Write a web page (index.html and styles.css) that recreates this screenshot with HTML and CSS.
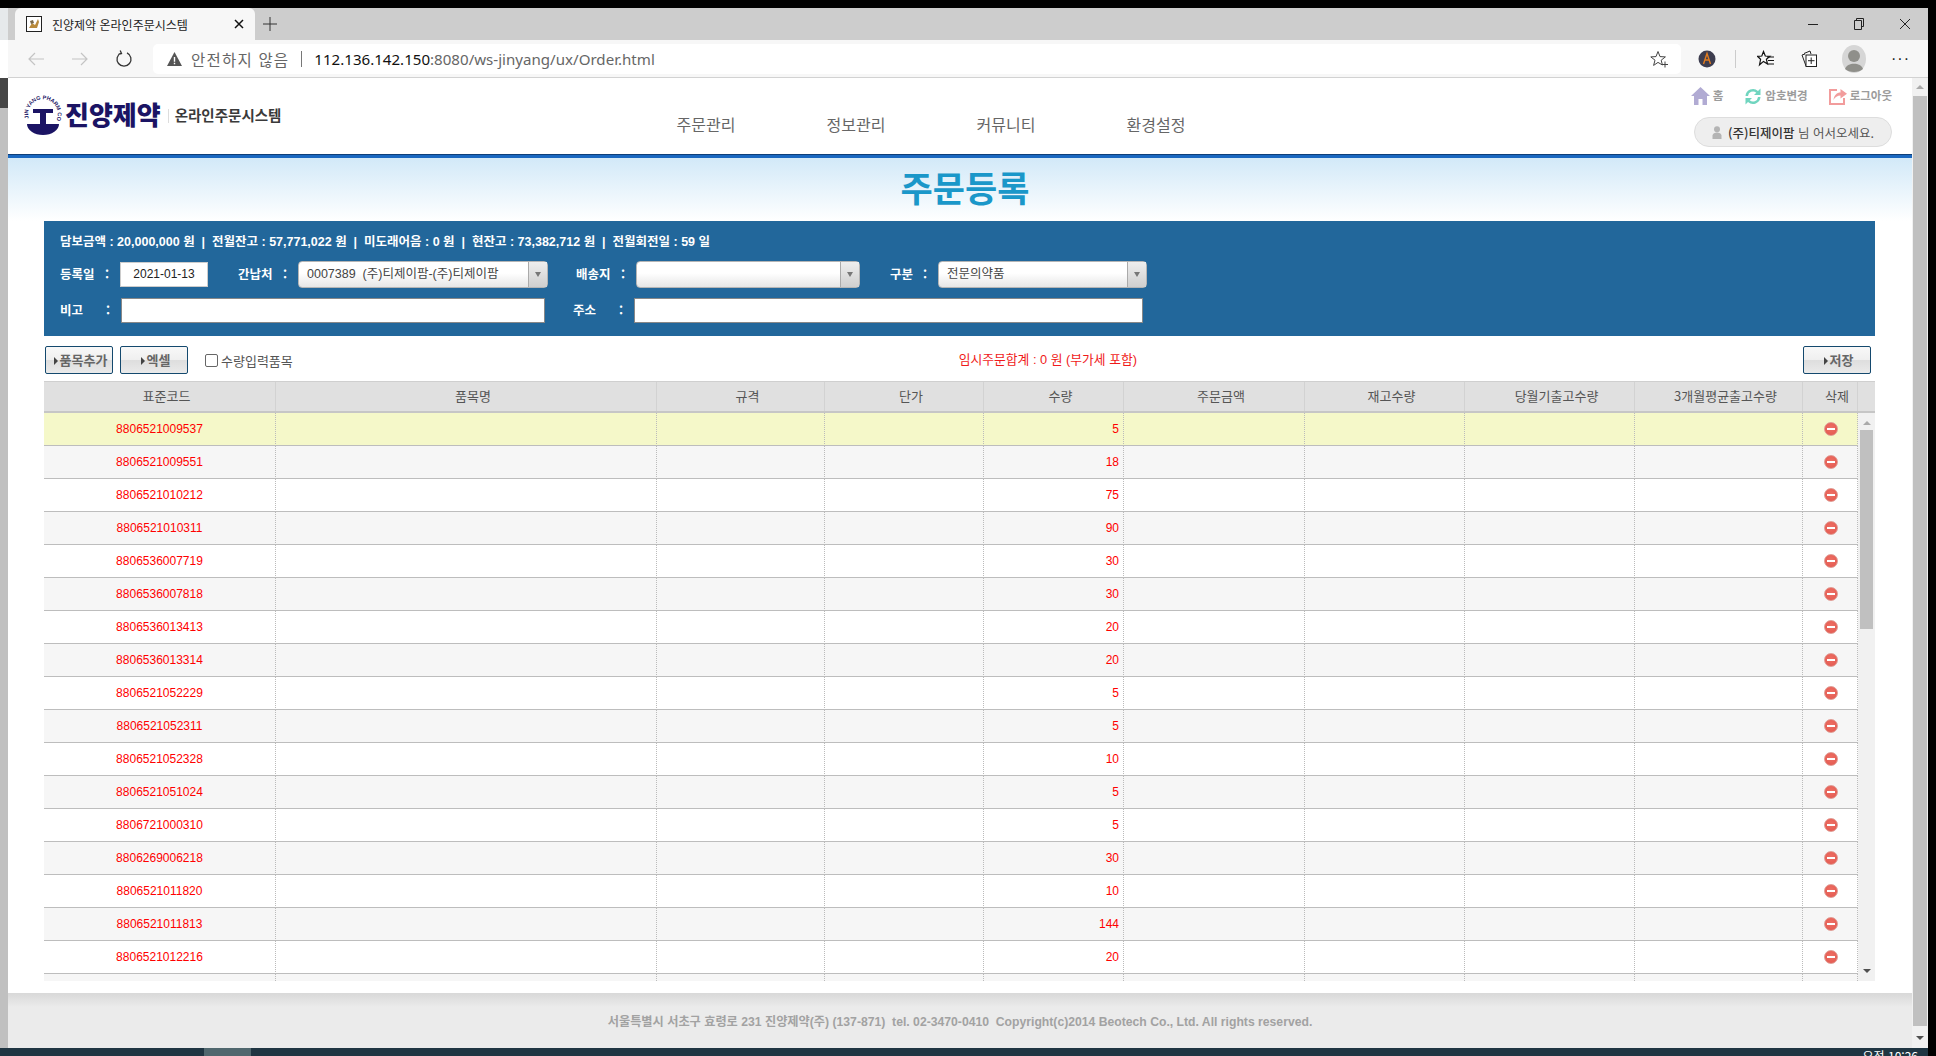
FILE: index.html
```html
<!DOCTYPE html>
<html lang="ko">
<head>
<meta charset="utf-8">
<title>진양제약 온라인주문시스템</title>
<link rel="stylesheet" href="styles.css">
</head>
<body>
<div class="screen-top"></div>
<div class="screen">
  <div class="desk">
    <div class="left-strip">
      <div class="ls-a"></div><div class="ls-b"></div><div class="ls-c"></div><div class="ls-d"></div>
    </div>
    <div class="browser">
      <!-- browser tabs -->
      <div class="tabstrip">
        <div class="tab">
          <svg class="favicon" width="16" height="16" viewBox="0 0 16 16"><rect x="0.5" y="0.5" width="15" height="15" fill="#fff" stroke="#222"/><path d="M3 12 L6 7 L9 9 L12 3 L13 6 L11 12 Z" fill="#b98a3c"/><path d="M4 5 L7 4 L8 7 L5 8 Z" fill="#7a6a4a"/></svg>
          <span class="tab-title">진양제약 온라인주문시스템</span>
          <svg class="tab-x" width="10" height="10" viewBox="0 0 10 10"><path d="M1 1 L9 9 M9 1 L1 9" stroke="#111" stroke-width="1.5"/></svg>
        </div>
        <svg class="tab-plus" width="14" height="14" viewBox="0 0 14 14"><path d="M7 0 V14 M0 7 H14" stroke="#333" stroke-width="1"/></svg>
        <div class="win-btns">
          <svg width="12" height="12" viewBox="0 0 12 12"><path d="M1 6.5 H11" stroke="#222"/></svg>
          <svg width="12" height="12" viewBox="0 0 12 12"><path d="M3.5 2.5 V0.5 H10.5 V8.5 H8.5 M1.5 2.5 H8.5 V11.5 H1.5 Z" fill="none" stroke="#222"/></svg>
          <svg width="12" height="12" viewBox="0 0 12 12"><path d="M1 1 L11 11 M11 1 L1 11" stroke="#222"/></svg>
        </div>
      </div>
      <div class="toolbar">
        <svg class="nav-ico" width="18" height="16" viewBox="0 0 18 16"><path d="M17 8 H2 M8 2 L2 8 L8 14" fill="none" stroke="#c4c4c4" stroke-width="1.2"/></svg>
        <svg class="nav-ico" width="18" height="16" viewBox="0 0 18 16"><path d="M1 8 H16 M10 2 L16 8 L10 14" fill="none" stroke="#c4c4c4" stroke-width="1.2"/></svg>
        <svg class="nav-ico" width="18" height="18" viewBox="0 0 18 18"><path d="M6 2.8 A7 7 0 1 0 12 2.8 M5.2 0.5 L6.5 3.5 L3.4 4.4" fill="none" stroke="#333" stroke-width="1.3"/></svg>
        <div class="addr">
          <svg class="warn" width="15" height="14" viewBox="0 0 15 14"><path d="M7.5 0 L15 14 H0 Z" fill="#555"/><path d="M6.8 5 H8.2 V9.8 H6.8 Z M6.8 10.8 H8.2 V12.2 H6.8 Z" fill="#fff"/></svg>
          <span class="addr-warn">안전하지 않음</span>
          <span class="addr-sep"></span>
          <span class="addr-url"><b>112.136.142.150</b>:8080/ws-jinyang/ux/Order.html</span>
          <svg class="addr-star" width="18" height="18" viewBox="0 0 18 18"><path d="M8 1.5 L10 6.6 L15.4 6.9 L11.2 10.2 L12.4 15 L8 12.4 L3.6 15.4 L5 10.2 L0.8 6.9 L6 6.6 Z" fill="none" stroke="#444"/><path d="M12 14.5 H18 M15 11.5 V17.5" stroke="#444"/></svg>
        </div>
        <div class="tb-right">
          <svg class="ext" width="18" height="18" viewBox="0 0 18 18"><circle cx="9" cy="9" r="8.5" fill="#3d3d4f"/><path d="M5.5 14 L9 3.5 L12.5 14 M6.8 10 H11.2" fill="none" stroke="#e07b1f" stroke-width="1.4"/></svg>
          <span class="tb-sep"></span>
          <svg class="fav" width="18" height="18" viewBox="0 0 18 18"><path d="M6.5 1.5 L8.3 6 L13 6.3 L9.4 9.3 L10.5 14 L6.5 11.4 L2.5 14.8 L3.6 9.3 L0.5 6.3 L4.8 6 Z" fill="none" stroke="#111" stroke-width="1.2"/><path d="M10 7 H17 M11 10.500 H17 M11 14 H17" stroke="#111" stroke-width="1.2"/></svg>
          <svg class="coll" width="18" height="18" viewBox="0 0 18 18"><path d="M4 3.500 L10 1 L11 4 M6 16 L2 5 L5 4" fill="none" stroke="#222"/><rect x="6" y="5" width="10.500" height="11.500" fill="#fff" stroke="#222"/><path d="M11.200 7.500 V14 M8 10.700 H14.500" stroke="#222"/></svg>
          <svg class="avatar" width="24" height="28" viewBox="0 0 24 28"><ellipse cx="12" cy="14" rx="12" ry="14" fill="#d6d6d6"/><circle cx="12" cy="11" r="6" fill="#8f8f8a"/><path d="M3 24 C5 17 19 17 21 24 C17 28 7 28 3 24 Z" fill="#8f8f8a"/></svg>
          <span class="dots">···</span>
        </div>
      </div>

      <!-- page in the browser -->
      <div class="viewport">
        <div class="page">
          <div class="header">
            <div class="logo">
              <svg class="emblem" width="32" height="40" viewBox="0 0 32 40">
                <defs><path id="ring" d="M3.500 27 A14.800 14.800 0 1 1 28.500 27"/></defs>
                <text class="emblem-txt"><textPath href="#ring" startOffset="4">JIN YANG PHARM CO</textPath></text>
                <path d="M6 14 H26 V18 H19 V29 H13 V18 H6 Z" fill="#1b1464"/>
                <path d="M0 29 H32 A16 11 0 0 1 0 29 Z" fill="#1b1464"/>
              </svg>
              <span class="logo-name">진양제약</span>
              <span class="logo-sep"></span>
              <span class="logo-sub">온라인주문시스템</span>
            </div>
            <div class="gnb">
              <a>주문관리</a><a>정보관리</a><a>커뮤니티</a><a>환경설정</a>
            </div>
            <div class="user-area">
              <div class="quick">
                <span class="quick-item">
                  <svg width="19" height="18" viewBox="0 0 19 18"><path d="M9.500 0 L19 9 H16 V18 H11.500 V12 H7.500 V18 H3 V9 H0 Z" fill="#b1abd3"/></svg>
                  <span>홈</span>
                </span>
                <span class="quick-item">
                  <svg width="18" height="19" viewBox="0 0 18 19"><path d="M1.500 9 A7.500 7.500 0 0 1 14 4 L16.500 1.500 V8 H10 L12.300 5.700 A5 5 0 0 0 4 9 Z M16.500 10 A7.500 7.500 0 0 1 4 15 L1.500 17.500 V11 H8 L5.700 13.300 A5 5 0 0 0 14 10 Z" fill="#70d5bf"/></svg>
                  <span>암호변경</span>
                </span>
                <span class="quick-item">
                  <svg width="18" height="18" viewBox="0 0 18 18"><path d="M8 3 H1 V17 H15 V11" fill="none" stroke="#f29c9c" stroke-width="2"/><path d="M4.500 13 C5 8 8 5.500 11.500 5.500 V2 L18 6.800 L11.500 11.500 V8.500 C8.500 8.500 6 10 4.500 13 Z" fill="#f29c9c"/></svg>
                  <span>로그아웃</span>
                </span>
              </div>
              <div class="welcome">
                <svg width="10" height="13" viewBox="0 0 10 13"><circle cx="5" cy="3.200" r="3" fill="#b4b4b4"/><path d="M0.500 13 V9.500 C0.500 7.500 3 6.500 5 6.500 C7 6.500 9.500 7.500 9.500 9.500 V13 Z" fill="#b4b4b4"/></svg>
                <b>(주)티제이팜</b>&nbsp;님 어서오세요.
              </div>
            </div>
          </div>
          <div class="blue-line"></div>

          <div class="title-band"><h1>주문등록</h1></div>

          <div class="search-panel">
            <div class="info-line">담보금액 : 20,000,000 원 &nbsp;|&nbsp; 전월잔고 : 57,771,022 원 &nbsp;|&nbsp; 미도래어음 : 0 원 &nbsp;|&nbsp; 현잔고 : 73,382,712 원 &nbsp;|&nbsp; 전월회전일 : 59 일</div>
            <div class="form-row row-a">
              <label class="lb w60"><span>등록일</span><span>:</span></label>
              <div class="date-box">2021-01-13</div>
              <label class="lb w60 gap30"><span>간납처</span><span>:</span></label>
              <div class="combo w250"><span class="combo-val">0007389 &nbsp;(주)티제이팜-(주)티제이팜</span><span class="combo-btn"></span></div>
              <label class="lb w60 gap28"><span>배송지</span><span>:</span></label>
              <div class="combo w224"><span class="combo-val"></span><span class="combo-btn"></span></div>
              <label class="lb w48 gap30"><span>구분</span><span>:</span></label>
              <div class="combo w209"><span class="combo-val">전문의약품</span><span class="combo-btn"></span></div>
            </div>
            <div class="form-row row-b">
              <label class="lb w61"><span>비고</span><span>:</span></label>
              <div class="text-box w424"></div>
              <label class="lb w61 gap28"><span>주소</span><span>:</span></label>
              <div class="text-box w509"></div>
            </div>
          </div>

          <div class="action-bar">
            <button class="btn">품목추가</button>
            <button class="btn">엑셀</button>
            <label class="chk"><span class="chk-box"></span>수량입력품목</label>
            <div class="total">임시주문합계 : 0 원 (부가세 포함)</div>
            <button class="btn save">저장</button>
          </div>

          <div class="grid">
            <div class="grid-head">
              <div class="th c1">표준코드</div>
              <div class="th c2">품목명</div>
              <div class="th c3">규격</div>
              <div class="th c4">단가</div>
              <div class="th c5">수량</div>
              <div class="th c6">주문금액</div>
              <div class="th c7">재고수량</div>
              <div class="th c8">당월기출고수량</div>
              <div class="th c9">3개월평균출고수량</div>
              <div class="th c10">삭제</div>
              <div class="th c11"></div>
            </div>
            <div class="grid-body">
              <table class="rows">
                <colgroup><col class="c1"><col class="c2"><col class="c3"><col class="c4"><col class="c5"><col class="c6"><col class="c7"><col class="c8"><col class="c9"><col class="c10"></colgroup>
                <tr class="sel"><td class="code">8806521009537</td><td></td><td></td><td></td><td class="qty">5</td><td></td><td></td><td></td><td></td><td class="del"><i></i></td></tr>
                <tr><td class="code">8806521009551</td><td></td><td></td><td></td><td class="qty">18</td><td></td><td></td><td></td><td></td><td class="del"><i></i></td></tr>
                <tr><td class="code">8806521010212</td><td></td><td></td><td></td><td class="qty">75</td><td></td><td></td><td></td><td></td><td class="del"><i></i></td></tr>
                <tr><td class="code">8806521010311</td><td></td><td></td><td></td><td class="qty">90</td><td></td><td></td><td></td><td></td><td class="del"><i></i></td></tr>
                <tr><td class="code">8806536007719</td><td></td><td></td><td></td><td class="qty">30</td><td></td><td></td><td></td><td></td><td class="del"><i></i></td></tr>
                <tr><td class="code">8806536007818</td><td></td><td></td><td></td><td class="qty">30</td><td></td><td></td><td></td><td></td><td class="del"><i></i></td></tr>
                <tr><td class="code">8806536013413</td><td></td><td></td><td></td><td class="qty">20</td><td></td><td></td><td></td><td></td><td class="del"><i></i></td></tr>
                <tr><td class="code">8806536013314</td><td></td><td></td><td></td><td class="qty">20</td><td></td><td></td><td></td><td></td><td class="del"><i></i></td></tr>
                <tr><td class="code">8806521052229</td><td></td><td></td><td></td><td class="qty">5</td><td></td><td></td><td></td><td></td><td class="del"><i></i></td></tr>
                <tr><td class="code">8806521052311</td><td></td><td></td><td></td><td class="qty">5</td><td></td><td></td><td></td><td></td><td class="del"><i></i></td></tr>
                <tr><td class="code">8806521052328</td><td></td><td></td><td></td><td class="qty">10</td><td></td><td></td><td></td><td></td><td class="del"><i></i></td></tr>
                <tr><td class="code">8806521051024</td><td></td><td></td><td></td><td class="qty">5</td><td></td><td></td><td></td><td></td><td class="del"><i></i></td></tr>
                <tr><td class="code">8806721000310</td><td></td><td></td><td></td><td class="qty">5</td><td></td><td></td><td></td><td></td><td class="del"><i></i></td></tr>
                <tr><td class="code">8806269006218</td><td></td><td></td><td></td><td class="qty">30</td><td></td><td></td><td></td><td></td><td class="del"><i></i></td></tr>
                <tr><td class="code">8806521011820</td><td></td><td></td><td></td><td class="qty">10</td><td></td><td></td><td></td><td></td><td class="del"><i></i></td></tr>
                <tr><td class="code">8806521011813</td><td></td><td></td><td></td><td class="qty">144</td><td></td><td></td><td></td><td></td><td class="del"><i></i></td></tr>
                <tr><td class="code">8806521012216</td><td></td><td></td><td></td><td class="qty">20</td><td></td><td></td><td></td><td></td><td class="del"><i></i></td></tr>
                <tr class="stub"><td></td><td></td><td></td><td></td><td></td><td></td><td></td><td></td><td></td><td></td></tr>
              </table>
              <div class="grid-scroll">
                <span class="arrow up"></span>
                <span class="thumb"></span>
                <span class="arrow down"></span>
              </div>
            </div>
          </div>

          <div class="footer">서울특별시 서초구 효령로 231 진양제약(주) (137-871) &nbsp;tel. 02-3470-0410 &nbsp;Copyright(c)2014 Beotech Co., Ltd. All rights reserved.</div>
        </div>
        <div class="page-scroll">
          <span class="arrow up"></span>
          <span class="thumb"></span>
          <span class="arrow down"></span>
        </div>
      </div>
    </div>
  </div>
  <div class="taskbar"><span class="task-app"></span><span class="clock">오전 10:26</span></div>
</div>
</body>
</html>
```

FILE: styles.css
```css
* {
    box-sizing: border-box;
}
html, body {
    margin: 0;
    height: 1056px;
    overflow: hidden;
    background: #000;
    font-family: "Liberation Sans", "Noto Sans CJK KR", sans-serif;
    font-size: 12px;
}
.screen-top {
    height: 8px;
    background: #000;
}
.screen {
    width: 1928px;
    height: 1048px;
    display: flex;
    flex-direction: column;
}
.desk {
    display: flex;
    height: 1040px;
}
.left-strip {
    width: 8px;
    display: flex;
    flex-direction: column;
}
.ls-a { height: 32px; background: #e6e9eb; }
.ls-b { height: 38px; background: #fff; }
.ls-c { height: 30px; background: #454545; }
.ls-d { flex: 1; background: #c0c0c0; }

/* browser */
.browser {
    width: 1920px;
    display: flex;
    flex-direction: column;
}
.tabstrip {
    height: 32px;
    background: #cdcdcd;
    display: flex;
    align-items: center;
    padding-left: 7px;
}
.tab {
    width: 240px;
    height: 32px;
    background: #f7f7f7;
    border-radius: 6px 6px 0 0;
    display: flex;
    align-items: center;
    padding: 0 11px 0 11px;
    font-family: "Noto Sans CJK KR", sans-serif;
    font-size: 12px;
    color: #222;
}
.tab-title {
    margin-left: 10px;
    flex: 1;
}
.tab-plus {
    margin-left: 8px;
}
.win-btns {
    margin-left: auto;
    display: flex;
    gap: 34px;
    padding-right: 17px;
}
.toolbar {
    height: 38px;
    background: #f7f7f7;
    border-bottom: 1px solid #d2d2d2;
    display: flex;
    align-items: center;
    padding-left: 19px;
}
.nav-ico {
    margin-right: 26px;
}
.nav-ico + .nav-ico + .nav-ico {
    margin-right: 20px;
}
.addr {
    width: 1528px;
    height: 30px;
    background: #fff;
    border-radius: 5px;
    display: flex;
    align-items: center;
    padding-left: 14px;
    font-size: 14px;
}
.addr-warn {
    margin-left: 9px;
    color: #666;
    font-family: "Noto Sans CJK KR", sans-serif;
    font-size: 15.500px;
    letter-spacing: 1.200px;
}
.addr-sep {
    width: 1px;
    height: 16px;
    background: #777;
    margin: 0 12px;
}
.addr-url {
    font-family: "Noto Sans", sans-serif;
    font-size: 15.100px;
    color: #666;
}
.addr-url b {
    font-weight: 400;
    color: #111;
}
.addr-star {
    margin-left: auto;
    margin-right: 13px;
}
.tb-right {
    flex: 1;
    display: flex;
    align-items: center;
}
.ext { margin-left: 17px; }
.tb-sep {
    width: 1px;
    height: 18px;
    background: #ccc;
    margin: 0 21px 0 19px;
}
.coll { margin-left: 25px; }
.avatar { margin-left: 24px; }
.dots {
    margin-left: 25px;
    font-size: 16px;
    color: #222;
    letter-spacing: 1px;
}

/* page */
.viewport {
    height: 970px;
    display: flex;
    background: #fff;
}
.page {
    width: 1904px;
    display: flex;
    flex-direction: column;
}
.header {
    height: 76px;
    display: flex;
}
.logo {
    width: 623px;
    display: flex;
    align-items: flex-start;
    padding: 17px 0 0 19px;
}
.emblem {
    overflow: visible;
}
.emblem-txt {
    font-family: "Liberation Sans", sans-serif;
    font-size: 5.500px;
    font-weight: 700;
    fill: #1b1464;
}
.logo-name {
    margin-left: 6px;
    margin-top: 0;
    font-family: "Noto Sans CJK KR", sans-serif;
    font-size: 26px;
    font-weight: 900;
    color: #1b1464;
    line-height: 38px;
}
.logo-sep {
    width: 1px;
    height: 14px;
    margin: 14px 6px 0 7px;
    background: #ddd;
}
.logo-sub {
    font-family: "Noto Sans CJK KR", sans-serif;
    font-size: 14.500px;
    font-weight: 700;
    color: #3a3a3a;
    line-height: 20px;
    margin-top: 10px;
}
.gnb {
    width: 600px;
    display: flex;
    padding-top: 34px;
}
.gnb a {
    width: 150px;
    text-align: center;
    font-family: "Noto Sans CJK KR", sans-serif;
    font-size: 16px;
    line-height: 24px;
    color: #666;
}
.user-area {
    margin-left: auto;
    padding-right: 20px;
    display: flex;
    flex-direction: column;
    align-items: flex-end;
}
.quick {
    height: 39px;
    padding-top: 9px;
    display: flex;
    gap: 21px;
}
.quick-item {
    display: flex;
    align-items: flex-start;
    gap: 3px;
    font-family: "Noto Sans CJK KR", sans-serif;
    font-size: 11.500px;
    font-weight: 700;
    line-height: 16px;
    color: #9c9c9c;
}
.welcome {
    width: 198px;
    height: 30px;
    background: #eee;
    border: 1px solid #ddd;
    border-radius: 15px;
    display: flex;
    align-items: center;
    padding-left: 17px;
    color: #555;
    font-family: "Noto Sans CJK KR", sans-serif;
    font-size: 12.500px;
}
.welcome svg {
    margin-right: 6px;
}
.welcome b {
    font-weight: 500;
    color: #333;
}
.blue-line {
    height: 4px;
    background: #1a68c0;
    border-top: 1px solid #0f3f78;
}
.title-band {
    height: 63px;
    background: linear-gradient(#d2e9f8, #fff);
    display: flex;
    align-items: center;
    justify-content: center;
    padding: 0 0 5px 10px;
}
.title-band h1 {
    margin: 0;
    font-family: "Noto Sans CJK KR", sans-serif;
    font-size: 35px;
    font-weight: 700;
    line-height: 44px;
    color: #1a97c9;
}

/* search box */
.search-panel {
    width: 1831px;
    height: 115px;
    margin-left: 36px;
    background: #22679b;
    padding: 12px 0 0 16px;
    color: #fff;
}
.info-line {
    height: 18px;
    line-height: 18px;
    font-weight: 700;
    font-size: 12.500px;
}
.form-row {
    display: flex;
    align-items: center;
}
.row-a {
    height: 27px;
    margin-top: 10px;
}
.row-b {
    height: 25px;
    margin-top: 10px;
}
.lb {
    display: flex;
    justify-content: space-between;
    padding-right: 11px;
    font-family: "Noto Sans CJK KR", sans-serif;
    font-size: 12.500px;
    font-weight: 700;
    margin-top: -3px;
}
.w48 { width: 48px; }
.w60 { width: 60px; }
.w61 { width: 61px; }
.gap28 { margin-left: 28px; }
.gap30 { margin-left: 30px; }
.date-box {
    width: 88px;
    height: 25px;
    background: #fff;
    border: 1px solid #ccc;
    color: #222;
    text-align: center;
    line-height: 23px;
}
.combo {
    height: 27px;
    display: flex;
    background: linear-gradient(#fff 45%, #e6e6e6);
    border: 1px solid #b5b5b5;
    border-radius: 4px;
    color: #444;
}
.w224 { width: 224px; }
.w209 { width: 209px; }
.w250 { width: 250px; }
.combo-val {
    flex: 1;
    padding-left: 8px;
    font-size: 12.500px;
    line-height: 24px;
    white-space: nowrap;
}
.combo-btn {
    width: 19px;
    background: linear-gradient(#eee, #cfcfcf);
    border-left: 1px solid #aaa;
    display: flex;
    align-items: center;
    justify-content: center;
}
.combo-btn::after {
    content: "";
    border-top: 5px solid #777;
    border-left: 3px solid transparent;
    border-right: 3px solid transparent;
}
.text-box {
    height: 25px;
    background: #fff;
    border: 1px solid #888;
}
.w424 { width: 424px; }
.w509 { width: 509px; }

/* buttons */
.action-bar {
    width: 1831px;
    height: 45px;
    margin-left: 36px;
    padding: 10px 4px 0 1px;
    display: flex;
    align-items: flex-start;
}
.btn {
    width: 68px;
    height: 28px;
    margin-right: 7px;
    padding: 0 0 0 3px;
    border: 1px solid #14496e;
    border-radius: 2px;
    background: linear-gradient(#f8f8f8 0, #efefef 50%, #dedede 52%, #eaeaea 100%);
    color: #666;
    font-family: "Noto Sans CJK KR", sans-serif;
    font-size: 13px;
    font-weight: 700;
    line-height: 24px;
}
.btn::before {
    content: "";
    display: inline-block;
    border-left: 4px solid #444;
    border-top: 4px solid transparent;
    border-bottom: 4px solid transparent;
    margin-right: 2px;
    vertical-align: 0;
}
.btn.save {
    margin-right: 0;
}
.chk {
    display: flex;
    align-items: center;
    height: 28px;
    margin-left: 10px;
    font-family: "Noto Sans CJK KR", sans-serif;
    font-size: 13px;
    color: #555;
}
.chk-box {
    width: 13px;
    height: 13px;
    margin-right: 3px;
    background: #fff;
    border: 1px solid #666;
    border-radius: 2px;
}
.total {
    flex: 1;
    height: 28px;
    line-height: 28px;
    text-align: center;
    font-size: 12.800px;
    color: #f01a1a;
}

/* grid */
.grid {
    width: 1831px;
    height: 600px;
    margin-left: 36px;
    display: flex;
    flex-direction: column;
}
.grid-head {
    height: 32px;
    display: flex;
    background: #e0e0e0;
    border-top: 1px solid #cfcfcf;
    border-bottom: 2px solid #c6c6c6;
}
.th {
    border-right: 1px solid #d2d2d2;
    padding-left: 14px;
    text-align: center;
    font-family: "Noto Sans CJK KR", sans-serif;
    font-size: 13px;
    line-height: 27px;
    color: #555;
}
.th.c11 { border-right: 0; }
.c1 { width: 232px; }
.c2 { width: 381px; }
.c3 { width: 168px; }
.c4 { width: 159px; }
.c5 { width: 140px; }
.c6 { width: 181px; }
.c7 { width: 160px; }
.c8 { width: 170px; }
.c9 { width: 168px; }
.c10 { width: 55px; }
.c11 { width: 17px; }
.grid-body {
    height: 568px;
    display: flex;
    overflow: hidden;
}
.rows {
    width: 1814px;
    table-layout: fixed;
    border-collapse: separate;
    border-spacing: 0;
    align-self: flex-start;
}
.rows td {
    height: 33px;
    padding: 0;
    border-right: 1px dotted #bbb;
    border-bottom: 1px solid #bdbdbd;
    background: #fff;
    color: #f00;
    font-size: 12px;
}
.rows tr:nth-child(even) td {
    background: #f6f6f6;
}
.rows tr.sel td {
    background: #f5f8c9;
}
.rows tr.stub td {
    height: 7px;
    background: #f6f6f6;
    border-bottom: 0;
}
.rows td.code {
    text-align: center;
}
.rows td.qty {
    text-align: right;
    padding-right: 4px;
}
.rows td.del i {
    display: block;
    width: 14px;
    height: 14px;
    margin: 0 auto;
    position: relative;
    left: 1px;
    border-radius: 50%;
    background: radial-gradient(circle at 50% 40%, #ee6f64, #e2574e);
    border: 1px solid #e09a92;
}
.rows td.del i::after {
    content: "";
    display: block;
    width: 8px;
    height: 2px;
    margin: 5px 0 0 2px;
    background: #fff;
}
.grid-scroll {
    width: 17px;
    background: #f1f1f1;
    display: flex;
    flex-direction: column;
    align-items: center;
    padding-top: 8px;
}
.grid-scroll .thumb {
    width: 13px;
    height: 199px;
    margin-top: 5px;
    background: #c0c0c0;
}
.arrow {
    width: 0;
    height: 0;
    border-left: 4px solid transparent;
    border-right: 4px solid transparent;
}
.arrow.up {
    border-bottom: 4px solid #aaa;
}
.arrow.down {
    border-top: 4px solid #505050;
}
.grid-scroll .arrow.down {
    margin-top: 340px;
}
.footer {
    height: 55px;
    margin-top: 12px;
    background: linear-gradient(#d8d8d8, #ebebeb 14px);
    text-align: center;
    padding-top: 20px;
    font-size: 12.200px;
    font-weight: 700;
    line-height: 18px;
    color: #a2a2a2;
}
.page-scroll {
    width: 16px;
    background: #f1f1f1;
    display: flex;
    flex-direction: column;
    align-items: center;
    padding-top: 7px;
}
.page-scroll .thumb {
    width: 14px;
    height: 930px;
    margin-top: 7px;
    background: #c0c0c0;
}
.page-scroll .arrow.down {
    margin-top: 10px;
}
.taskbar {
    height: 8px;
    background: #1f3542;
    overflow: hidden;
    display: flex;
    padding-left: 204px;
}
.task-app {
    width: 47px;
    background: #50676e;
}
.clock {
    margin-left: auto;
    margin-right: 10px;
    color: #fff;
    font-family: "Noto Sans CJK KR", sans-serif;
    font-size: 12px;
    line-height: 18px;
    margin-top: -1px;
}
```
